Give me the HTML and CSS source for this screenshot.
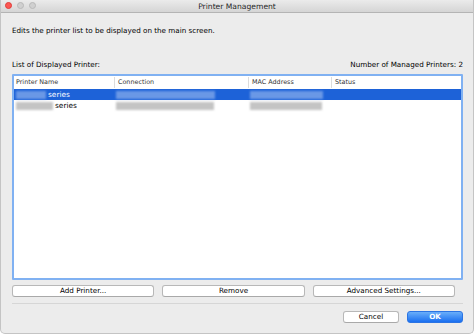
FILE: index.html
```html
<!DOCTYPE html>
<html>
<head>
<meta charset="utf-8">
<link rel="stylesheet" href="styles.css">
</head>
<body>
<div class="window">
  <div class="titlebar">
    <div class="lights">
      <span class="light red"></span>
      <span class="light"></span>
      <span class="light"></span>
    </div>
    <div class="title">Printer Management</div>
  </div>
  <div class="content">
    <div class="desc">Edits the printer list to be displayed on the main screen.</div>
    <div class="labels">
      <span>List of Displayed Printer:</span>
      <span>Number of Managed Printers: 2</span>
    </div>
    <div class="list">
      <div class="row header">
        <div class="cell c1">Printer Name</div>
        <div class="cell c2 sep">Connection</div>
        <div class="cell c3 sep">MAC Address</div>
        <div class="cell c4 sep">Status</div>
      </div>
      <div class="row selected">
        <div class="cell c1"><span class="blur w30"></span><span class="txt">series</span></div>
        <div class="cell c2"><span class="blur w99"></span></div>
        <div class="cell c3"><span class="blur w73"></span></div>
        <div class="cell c4"></div>
      </div>
      <div class="row">
        <div class="cell c1"><span class="blur w37"></span><span class="txt">series</span></div>
        <div class="cell c2"><span class="blur w98"></span></div>
        <div class="cell c3"><span class="blur w72"></span></div>
        <div class="cell c4"></div>
      </div>
    </div>
    <div class="actions">
      <button class="btn">Add Printer...</button>
      <button class="btn">Remove</button>
      <button class="btn">Advanced Settings...</button>
    </div>
    <div class="separator"></div>
    <div class="footer">
      <button class="btn small">Cancel</button>
      <button class="btn small primary">OK</button>
    </div>
  </div>
</div>
</body>
</html>
```
FILE: styles.css
```css
html, body {
  margin: 0;
  padding: 0;
  background: #ffffff;
}
body {
  font-family: "DejaVu Sans", Verdana, sans-serif;
  font-size: 7.2px;
  color: #000;
}
.window {
  width: 472px;
  height: 333px;
  border: 1px solid #c4c4c4;
  border-top: none;
  border-radius: 0 0 5px 5px;
  background: #ececec;
  display: flex;
  flex-direction: column;
  overflow: hidden;
}
.titlebar {
  height: 12px;
  border-bottom: 1px solid #b4b4b4;
  background: linear-gradient(#ebebeb, #d5d5d5);
  position: relative;
  display: flex;
  align-items: center;
  justify-content: center;
}
.lights {
  position: absolute;
  left: 4px;
  top: 2px;
  display: flex;
  gap: 5px;
}
.light {
  width: 7px;
  height: 7px;
  border-radius: 50%;
  background: #d0d0d0;
  border: 0.5px solid #b9b9b9;
  box-sizing: border-box;
}
.light.red {
  background: #fc5753;
  border-color: #df3d39;
}
.title {
  font-size: 7.6px;
  color: #262626;
}
.content {
  padding: 0 10px 0 11px;
  display: flex;
  flex-direction: column;
}
.desc {
  margin-top: 13px;
  line-height: 10px;
  height: 10px;
}
.labels {
  margin-top: 24px;
  line-height: 10px;
  display: flex;
  justify-content: space-between;
}
.list {
  margin-top: 4px;
  height: 202px;
  background: #fff;
  border: 2px solid #80b1f2;
  border-radius: 1px;
}
.row {
  display: flex;
  height: 11px;
  line-height: 11px;
}
.row.header {
  height: 13px;
  line-height: 13px;
  font-size: 6.4px;
  color: #333;
}
.cell {
  display: flex;
  align-items: center;
  gap: 2px;
  box-sizing: border-box;
  padding-left: 2px;
  white-space: nowrap;
}
.cell.sep {
  border-left: 1px solid #dcdcdc;
  padding-left: 3px;
}
.header .cell.sep {
  height: 11px;
  margin-top: 1px;
}
.c1 { width: 100px; }
.c2 { width: 134px; }
.c3 { width: 83px; }
.c4 { flex: 1; }
.row.selected {
  background: #1d62d8;
  color: #fff;
}
.txt {
  font-size: 7.4px;
}
.blur {
  display: inline-block;
  height: 8px;
  background: #c4c4c4;
  filter: blur(1px);
}
.selected .blur {
  background: #6a98e6;
}
.w30 { width: 30px; }
.w37 { width: 37px; }
.w99 { width: 99px; }
.w98 { width: 98px; }
.w73 { width: 73px; }
.w72 { width: 72px; }
.actions {
  margin-top: 5px;
  display: flex;
  gap: 8px;
  padding-right: 8px;
}
.btn {
  font-family: "DejaVu Sans", Verdana, sans-serif;
  font-size: 7.2px;
  color: #000;
  height: 12px;
  padding: 0;
  background: #fff;
  border: 1px solid #b8b8b8;
  border-bottom-color: #a9a9a9;
  border-radius: 3px;
  line-height: 10px;
}
.actions .btn {
  flex: 1;
}
.separator {
  margin-top: 6px;
  height: 1px;
  background: #d6d6d6;
}
.footer {
  margin-top: 7px;
  display: flex;
  justify-content: flex-end;
  gap: 8px;
}
.btn.small {
  width: 56px;
}
.btn.primary {
  background: linear-gradient(#69aefa, #1a6ff0);
  border-color: #2b74e3;
  color: #fff;
  font-weight: bold;
}
```
